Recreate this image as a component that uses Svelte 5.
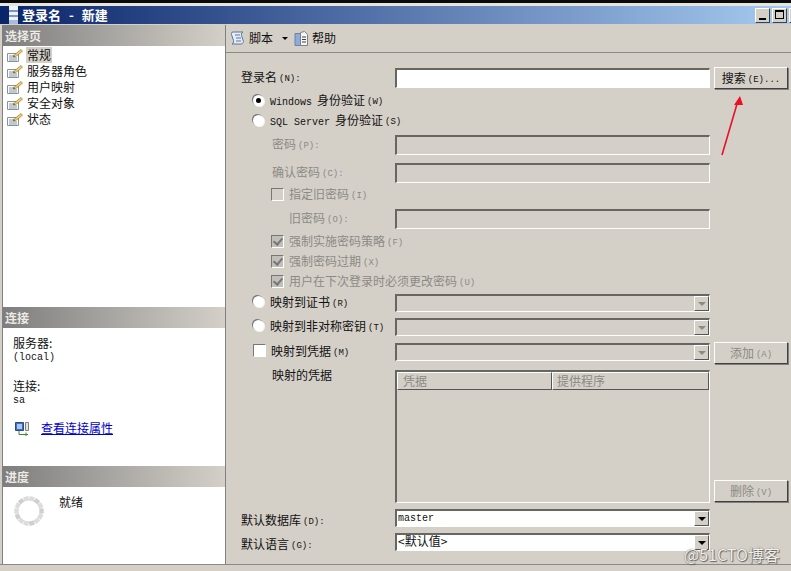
<script>
  const pages = ['常规', '服务器角色', '用户映射', '安全对象', '状态'];
  const spinner = Array.from({ length: 14 }, (_, i) => {
    const a = (i / 14) * Math.PI * 2;
    return { x: 16 + Math.cos(a) * 12.5, y: 16 + Math.sin(a) * 12.5, rot: (i / 14) * 360 };
  });
</script>

<svg width="0" height="0" class="defs" aria-hidden="true">
  <symbol id="page" viewBox="0 0 17 15">
    <path d="M1.500 5.500h11v8h-11z" fill="#fbfbf6" stroke="#8d9096" />
    <path d="M3 8h6M3 10h8M3 12h8" stroke="#7f9ab8" />
    <path d="M7 8l8-6.500 1.500 1.500-2 2-5.500 4z" fill="#f0cf70" stroke="#9a7a2c" stroke-width=".7" />
    <path d="M7 8l2-.5-1 2z" fill="#5a4a20" />
  </symbol>
</svg>

<div class="window">
  <div class="edge"></div>
  <div class="titlebar">
    <svg class="title-icon" width="11" height="18" viewBox="0 0 11 18">
      <path d="M1 0h9v18H1z" fill="#eef2fa" />
      <path d="M1 5h9M1 10h9" stroke="#5f77a8" stroke-width="1.500" />
      <path d="M1 14h9v4H1z" fill="#a9bbd8" />
    </svg>
    <span class="title">登录名 - 新建</span>
    <div class="caption">
      <span class="cap"><i class="min"></i></span>
      <span class="cap"><i class="max"></i></span>
      <span class="cap"></span>
    </div>
  </div>

  <div class="body">
    <aside class="side">
      <section class="pages">
        <h2>选择页</h2>
        <ul>
          {#each pages as page, i}
            <li>
              <svg width="17" height="15"><use href="#page" /></svg>
              <span class:selected={i === 0}>{page}</span>
            </li>
          {/each}
        </ul>
      </section>

      <section class="conn">
        <h2>连接</h2>
        <div class="conn-body">
          <div class="cap-label">服务器:</div>
          <div class="mono">(local)</div>
          <div class="cap-label second">连接:</div>
          <div class="mono">sa</div>
          <div class="link-row">
            <svg width="16" height="16" viewBox="0 0 16 16">
              <path d="M1.500 2.500h8v8h-8z" fill="#3f6fc4" stroke="#2c4a8c" />
              <path d="M3 4h5v5H3z" fill="#a9c8f0" />
              <path d="M11.500 2.500h3v8h-3z" fill="#e4e4de" stroke="#808078" />
              <path d="M5 11v3.500h9M12 12.500v4" stroke="#3f8a2f" fill="none" />
            </svg>
            <span class="link">查看连接属性</span>
          </div>
        </div>
      </section>

      <section class="progress">
        <h2>进度</h2>
        <div class="progress-body">
          <svg width="32" height="32" viewBox="0 0 32 32">
            {#each spinner as d, i}
              <rect
                x={d.x - 2.6}
                y={d.y - 2.2}
                width="5.200"
                height="4.400"
                fill={i % 3 === 0 ? '#cfcfcf' : '#dcdcdc'}
                transform={`rotate(${d.rot + 90} ${d.x} ${d.y})`}
              />
            {/each}
          </svg>
          <span>就绪</span>
        </div>
      </section>
    </aside>

    <main class="main">
      <div class="toolbar">
        <svg class="tool-icon" width="16" height="16" viewBox="0 0 16 16">
          <path d="M3 2h10c-2 1-2 3-1 5l1 3c1 2 0 4-2 4H2c2-1 2-3 1-5L2 6C1 4 1 2 3 2z" fill="#e6edf8" stroke="#5a779f" />
          <path d="M5 5h5M6 8h5M6 11h5" stroke="#5a779f" />
        </svg>
        <span class="tool-text">脚本</span>
        <span class="tool-arrow"></span>
        <svg class="tool-icon" width="15" height="17" viewBox="0 0 15 17">
          <path d="M1 3.500h6v12H1z" fill="#8fabd6" stroke="#6a82ad" />
          <path d="M6.500 2.500l4-1 3 3v11h-7z" fill="#f6f6f2" stroke="#7a7f8a" />
          <path d="M8 7h4M8 9.500h4M8 12h4" stroke="#39424f" />
        </svg>
        <span class="tool-text">帮助</span>
      </div>

      <div class="form">
        <div class="row name">
          <label class="lbl">登录名<small>(N):</small></label>
          <div class="field white"></div>
          <button class="btn">搜索<small>(E)...</small></button>
        </div>

        <div class="opt win">
          <span class="radio on"></span>
          <span><b class="lat">Windows</b>身份验证<small>(W)</small></span>
        </div>
        <div class="opt sql">
          <span class="radio"></span>
          <span><b class="lat">SQL Server</b>身份验证<small>(S)</small></span>
        </div>

        <div class="row pw off">
          <label class="lbl in">密码<small>(P):</small></label>
          <div class="field"></div>
        </div>
        <div class="row pw2 off">
          <label class="lbl in">确认密码<small>(C):</small></label>
          <div class="field"></div>
        </div>
        <div class="opt check old off">
          <span class="box"></span>
          <span>指定旧密码<small>(I)</small></span>
        </div>
        <div class="row oldpw off">
          <label class="lbl in2">旧密码<small>(O):</small></label>
          <div class="field"></div>
        </div>
        <div class="opt check c1 off">
          <span class="box ticked"></span>
          <span>强制实施密码策略<small>(F)</small></span>
        </div>
        <div class="opt check off">
          <span class="box ticked"></span>
          <span>强制密码过期<small>(X)</small></span>
        </div>
        <div class="opt check off">
          <span class="box ticked"></span>
          <span>用户在下次登录时必须更改密码<small>(U)</small></span>
        </div>

        <div class="row map m1">
          <div class="map-opt"><span class="radio"></span><span>映射到证书<small>(R)</small></span></div>
          <div class="field combo"><span class="drop dis"></span></div>
        </div>
        <div class="row map m2">
          <div class="map-opt"><span class="radio"></span><span>映射到非对称密钥<small>(T)</small></span></div>
          <div class="field combo"><span class="drop dis"></span></div>
        </div>
        <div class="row map m3">
          <div class="map-opt"><span class="box white-box"></span><span>映射到凭据<small>(M)</small></span></div>
          <div class="field combo"><span class="drop dis"></span></div>
          <button class="btn off-btn add">添加<small>(A)</small></button>
        </div>

        <div class="row creds">
          <label class="lbl in top">映射的凭据</label>
          <div class="field table">
            <div class="thead">
              <span class="th first">凭据</span>
              <span class="th">提供程序</span>
            </div>
          </div>
          <button class="btn off-btn bottom">删除<small>(V)</small></button>
        </div>

        <div class="row db">
          <label class="lbl low">默认数据库<small>(D):</small></label>
          <div class="field white combo"><span class="mono val">master</span><span class="drop"></span></div>
        </div>
        <div class="row lang">
          <label class="lbl low">默认语言<small>(G):</small></label>
          <div class="field white combo"><span class="val raised">&lt;默认值&gt;</span><span class="drop"></span></div>
        </div>
      </div>
    </main>
  </div>

  <svg class="arrow" width="30" height="64" viewBox="0 0 30 64">
    <path d="M2 62L17 11" stroke="#e8102a" stroke-width="1.600" fill="none" />
    <path d="M20 3l3 9-9 0z" fill="#ee1020" />
  </svg>
  <div class="watermark">@51CTO博客</div>
</div>

<style>
  :global(body) {
    background: #d4d0c8;
  }
  .defs {
    position: absolute;
  }
  .window {
    position: relative;
    width: 791px;
    height: 571px;
    overflow: hidden;
    display: flex;
    flex-direction: column;
    background: #d4d0c8;
    font: 12px/16px "Noto Sans CJK SC", "Liberation Sans", sans-serif;
    color: #111;
  }
  .edge {
    height: 3px;
    margin-bottom: 3px;
    background: #0a0a0a;
    box-shadow: 0 3px 0 #e6e4de;
    flex: none;
  }
  .titlebar {
    height: 18px;
    flex: none;
    display: flex;
    align-items: center;
    padding-left: 8px;
    background: linear-gradient(90deg, #0a246a, #a6caf0);
    color: #fff;
  }
  .title-icon {
    flex: none;
    margin-right: 3px;
  }
  .title {
    font-size: 13px;
    font-weight: 700;
    white-space: pre;
    word-spacing: 5px;
  }
  .caption {
    margin-left: auto;
    margin-top: 1px;
    display: flex;
    gap: 2px;
    margin-right: -13px;
  }
  .cap {
    width: 15px;
    height: 15px;
    box-sizing: border-box;
    background: #d4d0c8;
    border: 1px solid;
    border-color: #fff #404040 #404040 #fff;
    position: relative;
  }
  .min {
    position: absolute;
    left: 3px;
    bottom: 2px;
    width: 7px;
    height: 2px;
    background: #000;
  }
  .max {
    position: absolute;
    left: 2px;
    top: 1px;
    width: 9px;
    height: 9px;
    box-sizing: border-box;
    border: 1px solid #000;
    border-top-width: 2px;
  }

  .body {
    flex: 1;
    display: flex;
    min-height: 0;
    margin: 1px 0 6px;
    padding-left: 2px;
    border-bottom: 1px solid #8c8a84;
  }
  .side {
    width: 224px;
    flex: none;
    display: flex;
    flex-direction: column;
    box-sizing: border-box;
    border-left: 1px solid #808080;
    border-right: 1px solid #808080;
    background: #fff;
  }
  h2 {
    margin: 0;
    height: 21px;
    box-sizing: border-box;
    padding-left: 2px;
    font-size: 12px;
    line-height: 21px;
    font-weight: 700;
    color: #eceae4;
    background: linear-gradient(90deg, #7e7e7e, #d4d0c8);
  }
  .pages {
    height: 282px;
    flex: none;
  }
  ul {
    margin: 0;
    padding: 1px 0 0 3px;
    list-style: none;
  }
  li {
    height: 16px;
    display: flex;
    align-items: center;
    gap: 3px;
  }
  li span {
    padding: 0 1px;
    line-height: 16px;
  }
  .selected {
    background: #d4d0c8;
  }
  .conn {
    height: 159px;
    flex: none;
  }
  .conn-body {
    padding: 7px 0 0 10px;
  }
  .cap-label {
    line-height: 15px;
  }
  .cap-label.second {
    margin-top: 15px;
  }
  .mono {
    font: 10px/10px "Liberation Mono", monospace;
    margin-top: 3px;
  }
  .link-row {
    margin: 14px 0 0 1px;
    display: flex;
    align-items: center;
    gap: 11px;
  }
  .link {
    color: #0000cc;
    text-decoration: underline;
  }
  .progress {
    flex: 1;
  }
  .progress-body {
    display: flex;
    padding: 7px 0 0 10px;
    gap: 14px;
  }
  .progress-body svg {
    margin-top: 1px;
  }

  .main {
    flex: 1;
    min-width: 0;
    display: flex;
    flex-direction: column;
  }
  .toolbar {
    height: 28px;
    flex: none;
    box-sizing: border-box;
    display: flex;
    align-items: center;
    padding: 0 0 1px 4px;
    border-bottom: 1px solid #8c8a84;
  }
  .tool-text {
    margin-left: 3px;
  }
  .tool-arrow {
    margin: 0 6px 0 9px;
    border: 3px solid transparent;
    border-top-color: #000;
    border-bottom: 0;
  }
  .form {
    padding: 15px 0 0 15px;
    display: flex;
    flex-direction: column;
  }
  .row {
    display: grid;
    grid-template-columns: 150px 315px 75px;
    grid-template-rows: minmax(0, 1fr);
    column-gap: 4px;
    align-items: center;
    flex: none;
  }
  .name { height: 20px; }
  .pw { height: 20px; margin-top: 5px; }
  .pw2 { height: 20px; margin-top: 8px; }
  .oldpw { height: 20px; margin-top: 5px; }
  .m1 { height: 18px; margin-top: 3px; }
  .m2 { height: 18px; margin-top: 6px; }
  .m3 { height: 18px; margin-top: 7px; }
  .creds { height: 133px; margin-top: 9px; align-items: stretch; }
  .db { height: 18px; margin-top: 6px; }
  .lang { height: 18px; margin-top: 6px; }

  .lbl {
    white-space: nowrap;
    padding-bottom: 2px;
  }
  .lbl.in { padding-left: 31px; }
  .lbl.in2 { padding-left: 48px; }
  .lbl.top { margin-top: -3px; }
  .lbl.low { padding: 4px 0 0; }
  small {
    font: 9px/1 "Liberation Mono", monospace;
    margin-left: 2px;
    position: relative;
    top: -1px;
  }
  .off {
    color: #8c8a84;
  }
  .field {
    height: 100%;
    box-sizing: border-box;
    border: 2px solid;
    border-color: #686660 #fff #fff #686660;
    border-right-width: 1px;
    border-bottom-width: 1px;
    position: relative;
    display: flex;
    align-items: center;
  }
  .white {
    background: #fff;
  }
  .btn {
    padding: 0;
    font: inherit;
    height: 22px;
    margin-top: -1px;
    color: #111;
    background: #d4d0c8;
    border: 1px solid;
    border-color: #fff #404040 #404040 #fff;
    box-shadow: 1px 1px 0 #808080;
    width: 74px;
  }
  .off-btn {
    color: #8c8a84;
  }
  .add {
    margin-top: 1px;
  }
  .bottom {
    align-self: end;
    margin: 0 0 1px;
  }
  .opt {
    display: flex;
    align-items: center;
    gap: 6px;
    height: 20px;
    padding-left: 12px;
    white-space: nowrap;
    flex: none;
  }
  .win { margin-top: 2px; }
  .check { padding-left: 30px; gap: 5px; }
  .check.old { margin-top: 1px; }
  .check.c1 { margin-top: 2px; }
  .lat {
    font: 10px/1 "Liberation Mono", monospace;
    margin-right: 5px;
  }
  .radio {
    width: 11px;
    height: 11px;
    border-radius: 50%;
    background: #fff;
    box-shadow: -1px -1px 0 #777, 1px 1px 0 #f5f5f2;
    flex: none;
    position: relative;
  }
  .radio.on::after {
    content: '';
    position: absolute;
    left: 3px;
    top: 3px;
    width: 5px;
    height: 5px;
    border-radius: 50%;
    background: #000;
  }
  .box {
    width: 11px;
    height: 11px;
    box-sizing: content-box;
    border: 1px solid;
    border-color: #777 #fff #fff #777;
    flex: none;
    position: relative;
  }
  .white-box {
    background: #fff;
    margin-right: -1px;
  }
  .ticked {
    background: #c2bfb8;
  }
  .ticked::after {
    content: '';
    position: absolute;
    left: 3px;
    top: 0;
    width: 4px;
    height: 7px;
    border: solid #777;
    border-width: 0 2px 2px 0;
    transform: rotate(40deg);
  }
  .map-opt {
    display: flex;
    align-items: center;
    gap: 6px;
    padding-left: 12px;
    margin-top: -3px;
    white-space: nowrap;
  }
  .combo {
    justify-content: space-between;
  }
  .drop {
    position: absolute;
    right: 0;
    top: 0;
    bottom: 0;
    width: 15px;
    background: #d4d0c8;
    border: 1px solid;
    border-color: #fff #555 #555 #fff;
    box-sizing: border-box;
  }
  .drop::after {
    content: '';
    position: absolute;
    left: 3px;
    top: 5px;
    border: 4px solid transparent;
    border-top-color: #000;
    border-bottom: 0;
  }
  .drop.dis::after {
    border-top-color: #8c8a84;
  }
  .val {
    padding-left: 1px;
  }
  .val.mono {
    font-size: 10px;
    margin-top: 0;
  }
  .val.raised {
    padding-bottom: 3px;
  }
  .table {
    display: block;
    height: 133px;
  }
  .thead {
    display: flex;
    height: 18px;
  }
  .th {
    box-sizing: border-box;
    height: 18px;
    flex: 1;
    padding-left: 4px;
    line-height: 16px;
    color: #8c8a84;
    border: 1px solid;
    border-color: #fff #555 #555 #fff;
  }
  .th.first {
    flex: 0 0 155px;
    padding-left: 5px;
  }
  .arrow {
    position: absolute;
    left: 720px;
    top: 93px;
  }
  .watermark {
    position: absolute;
    left: 684px;
    top: 545px;
    font-size: 16px;
    line-height: 18px;
    color: #f2f0ea;
    text-shadow: 0 0 1px #555, 1px 1px 1px #666;
  }
</style>
